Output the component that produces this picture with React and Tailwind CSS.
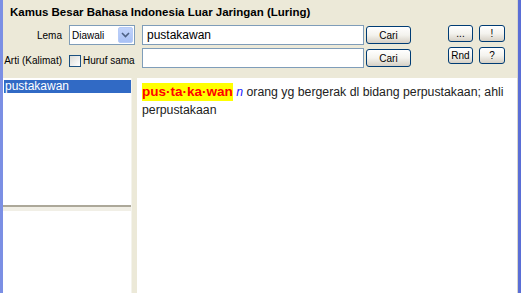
import React from "react";

function XPButton({ className = "", children }) {
  return (
    <div
      className={
        "flex items-center justify-center rounded-[3px] border border-[#003c74] bg-gradient-to-b from-[#ffffff] via-[#f4f3ee] to-[#d6d0c5] text-[10px] text-black " +
        className
      }
    >
      {children}
    </div>
  );
}

export default function App() {
  return (
    <div
      className="flex h-[293px] w-[521px] overflow-hidden bg-[#ece9d8]"
      style={{ fontFamily: '"Liberation Sans", Arial, sans-serif' }}
    >
      <div className="w-[3px] shrink-0 bg-[#7b8fe4]" />
      <div className="flex min-w-0 flex-1 flex-col">
        {/* Header */}
        <div className="h-[78px] shrink-0">
          <div className="pl-[7px] pt-[5px] text-[11.5px] font-bold leading-[14px] text-black">
            Kamus Besar Bahasa Indonesia Luar Jaringan (Luring)
          </div>
          <div className="mt-[6px] flex">
            <div className="flex flex-col">
              {/* row 1 */}
              <div className="flex h-[20px] items-center">
                <div className="w-[60px] pr-[1px] text-right text-[10px]">Lema</div>
                <div className="ml-[6px] flex h-[20px] w-[66px] items-center border border-[#7f9db9] bg-white pl-[2px]">
                  <span className="flex-1 text-[10px]">Diawali</span>
                  <div className="mr-[1px] flex h-[16px] w-[15px] items-center justify-center rounded-[2px] border border-[#b6cbf7] bg-gradient-to-b from-[#c1d3fb] to-[#a9c1f5]">
                    <svg width="9" height="6" viewBox="0 0 9 6">
                      <path d="M1 1 L4.5 4.5 L8 1" stroke="#4d6185" strokeWidth="1.6" fill="none" />
                    </svg>
                  </div>
                </div>
                <div className="ml-[7px] flex h-[20px] w-[222px] items-center border border-[#7f9db9] bg-white pl-[4px] text-[12px]">
                  pustakawan
                </div>
                <XPButton className="ml-[2px] h-[18px] w-[45px]">Cari</XPButton>
              </div>
              {/* row 2 */}
              <div className="mt-[3px] flex h-[20px] items-center">
                <div className="w-[60px] whitespace-nowrap pr-[1px] pt-[4px] text-right text-[10px]">Arti (Kalimat)</div>
                <div className="ml-[6px] flex w-[66px] items-center whitespace-nowrap pt-[5px]">
                  <div className="h-[12px] w-[12px] shrink-0 border border-[#1c5180] bg-gradient-to-br from-[#dcdcd7] to-white" />
                  <span className="ml-[2px] text-[10px]">Huruf sama</span>
                </div>
                <div className="ml-[7px] h-[20px] w-[222px] border border-[#7f9db9] bg-white" />
                <XPButton className="ml-[2px] h-[18px] w-[45px]">Cari</XPButton>
              </div>
            </div>
            <div className="ml-[37px] flex flex-col gap-[5px]">
              <div className="flex gap-[6px]">
                <XPButton className="h-[17px] w-[25px]">...</XPButton>
                <XPButton className="h-[17px] w-[26px]">!</XPButton>
              </div>
              <div className="flex gap-[6px]">
                <XPButton className="h-[17px] w-[25px]">Rnd</XPButton>
                <XPButton className="h-[17px] w-[26px]">?</XPButton>
              </div>
            </div>
          </div>
        </div>
        {/* Content */}
        <div className="flex min-h-0 flex-1">
          <div className="flex w-[128px] shrink-0 flex-col">
            <div className="h-[127px] bg-white pl-[1px] pt-[2px]">
              <div className="h-[13px] bg-[#316ac5] pl-[1px] text-[12px] leading-[13px] text-white">
                pustakawan
              </div>
            </div>
            <div className="h-[2px] bg-[#aca899]" />
            <div className="h-[4px] bg-[#f1efe6]" />
            <div className="flex-1 bg-white" />
          </div>
          <div className="w-[6px] shrink-0 border-l border-[#f4f3ec] bg-[#ece9d8]" />
          <div className="flex-1 bg-white pl-[5px] pr-[8px] pt-[5px] text-[12.3px] leading-[18px] text-[#222]">
            <span className="inline-block bg-[#ffff00] align-top text-[13.5px] font-bold leading-[18px] text-[#ff0000]">
              pus·ta·ka·wan
            </span>{" "}
            <span className="italic text-[#2020ff]">n</span> orang yg bergerak dl bidang perpustakaan; ahli
            perpustakaan
          </div>
        </div>
      </div>
      <div className="w-[1px] shrink-0 bg-[#d8d6cc]" />
      <div className="w-[3px] shrink-0 bg-[#5a6ed6]" />
    </div>
  );
}
